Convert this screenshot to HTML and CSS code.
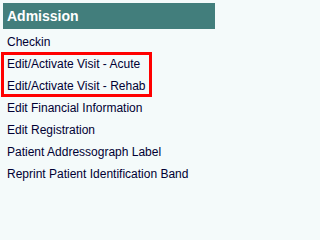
FILE: index.html
```html
<!DOCTYPE html>
<html>
<head>
<meta charset="utf-8">
<link rel="stylesheet" href="styles.css">
</head>
<body>
<div class="panel">
  <div class="panel-header">Admission</div>
  <ul class="menu">
    <li class="item">Checkin</li>
    <li class="group">
      <ul class="menu">
        <li class="item">Edit/Activate Visit - Acute</li>
        <li class="item">Edit/Activate Visit - Rehab</li>
      </ul>
    </li>
    <li class="item">Edit Financial Information</li>
    <li class="item">Edit Registration</li>
    <li class="item">Patient Addressograph Label</li>
    <li class="item">Reprint Patient Identification Band</li>
  </ul>
</div>
</body>
</html>
```

FILE: styles.css
```css
html, body {
  margin: 0;
  padding: 0;
  background: #f4fafa;
}
.panel {
  width: 212px;
  padding: 3px;
  font-family: "Liberation Sans", Arial, sans-serif;
}
.panel-header {
  height: 26px;
  line-height: 26px;
  padding-left: 4px;
  background: #427e7c;
  color: #ffffff;
  font-weight: bold;
  font-size: 14px;
}
.menu {
  list-style: none;
  margin: 0;
  padding: 0;
}
.panel > .menu {
  margin-top: 2px;
}
.item {
  height: 22px;
  line-height: 22px;
  padding-left: 4px;
  font-size: 12px;
  color: #000033;
  white-space: nowrap;
}
.group {
  position: relative;
}
.group::after {
  content: "";
  position: absolute;
  left: -2px;
  top: -1px;
  width: 151px;
  height: 45px;
  box-sizing: border-box;
  border: 3px solid #ff0000;
  pointer-events: none;
}
```
